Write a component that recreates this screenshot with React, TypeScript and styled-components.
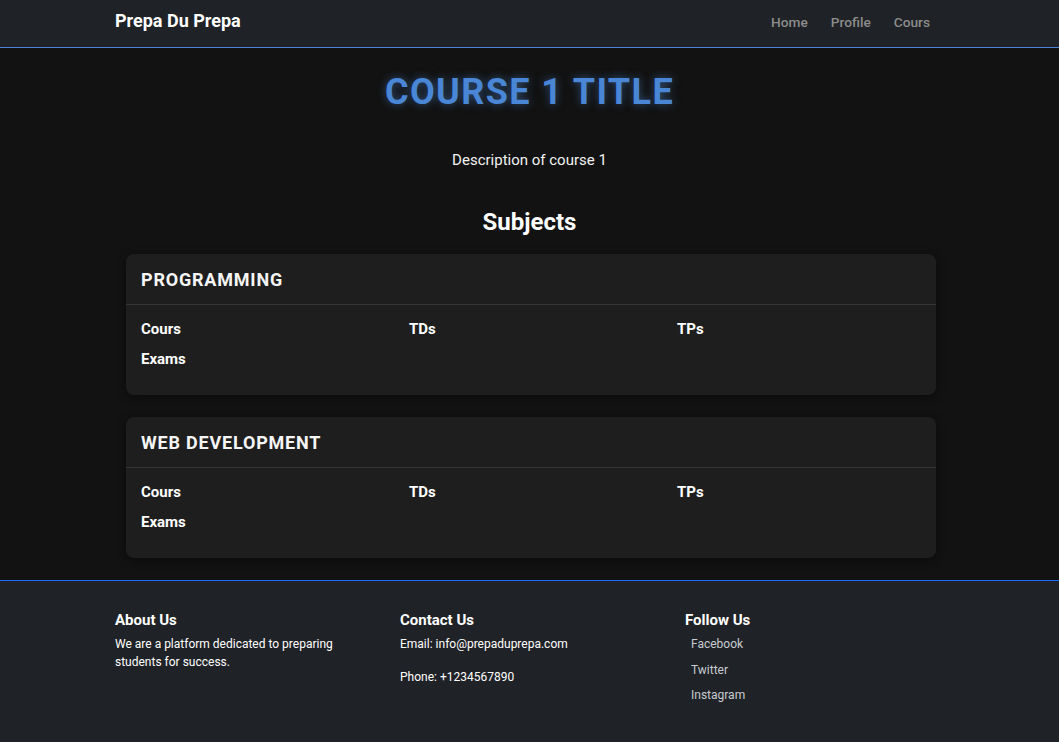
import React from "react";
import styled, { createGlobalStyle } from "styled-components";

const GlobalStyle = createGlobalStyle`
	* {
		box-sizing: border-box;
	}
	body {
		margin: 0;
		background-color: #121212;
		color: #ffffff;
		font-family: Roboto, "Liberation Sans", sans-serif;
	}
`;

const subjects = [
	{ name: "Programming", items: ["Cours", "TDs", "TPs", "Exams"] },
	{ name: "Web Development", items: ["Cours", "TDs", "TPs", "Exams"] },
];

const navLinks = ["Home", "Profile", "Cours"];
const socialLinks = ["Facebook", "Twitter", "Instagram"];

const Page = styled.div`
	min-height: 742px;
	display: flex;
	flex-direction: column;
`;

const Container = styled.div`
	width: 829px;
	margin: 0 auto;
`;

const NavBar = styled.nav`
	background-color: #1f2226;
	border-bottom: 1px solid #4f82d4;
	height: 48px;
`;

const NavInner = styled(Container)`
	height: 100%;
	display: flex;
	align-items: center;
	justify-content: space-between;
`;

const Brand = styled.a`
	font-size: 18px;
	font-weight: 700;
	color: #ffffff;
	text-decoration: none;
	margin-top: -6px;
`;

const NavList = styled.ul`
	list-style: none;
	display: flex;
	margin: 0 14px 0 0;
	padding: 0;
`;

const NavItem = styled.li`
	font-size: 13.7px;
	font-weight: 500;
	color: #8c8c8c;
	padding: 0 11.5px;
	margin-top: -4px;
	&:last-child {
		padding-right: 0;
	}
`;

const Main = styled.main`
	flex: 1;
	padding: 22px 0 15px;
`;

const Title = styled.h1`
	margin: 0;
	text-align: center;
	font-size: 36px;
	font-weight: 700;
	letter-spacing: 1.4px;
	text-transform: uppercase;
	color: #4a86d6;
	text-shadow: 0 0 8px rgba(74, 134, 214, 0.55);
	line-height: 44px;
`;

const Description = styled.p`
	margin: 37px 0 0;
	text-align: center;
	font-size: 15px;
	color: #f2f2f2;
`;

const SectionTitle = styled.h2`
	margin: 36px 0 0;
	text-align: center;
	font-size: 24px;
	font-weight: 700;
	line-height: 34px;
`;

const CardList = styled.div`
	display: flex;
	flex-direction: column;
	gap: 22px;
	margin: 15px 8px 0 11px;
`;

const Card = styled.section`
	background-color: #1e1e1e;
	border-radius: 8px;
	box-shadow: 0 2px 10px rgba(0, 0, 0, 0.45);
	overflow: hidden;
`;

const CardHeader = styled.h3`
	margin: 0;
	height: 51px;
	padding: 0 15px;
	display: flex;
	align-items: center;
	font-size: 18px;
	font-weight: 700;
	letter-spacing: 0.8px;
	text-transform: uppercase;
	border-bottom: 1px solid #363636;
	color: #f5f5f5;
`;

const CardBody = styled.div`
	display: grid;
	grid-template-columns: repeat(3, 268px);
	row-gap: 12px;
	padding: 15px 15px 27px;
`;

const SubjectLink = styled.a`
	font-size: 15px;
	font-weight: 700;
	line-height: 18px;
	color: #ffffff;
	text-decoration: none;
`;

const Footer = styled.footer`
	background-color: #1f2226;
	border-top: 1px solid #1a6dfc;
	padding: 29px 0 38px;
`;

const FooterRow = styled(Container)`
	display: grid;
	grid-template-columns: 285px 285px 1fr;
`;

const FooterColumn = styled.div`
	display: flex;
	flex-direction: column;
`;

const FooterHeading = styled.h4`
	margin: 0 0 5px;
	font-size: 15px;
	font-weight: 700;
	line-height: 20px;
`;

const FooterText = styled.p`
	margin: 0 0 15px;
	font-size: 12px;
	line-height: 18px;
	color: #ffffff;
	max-width: 240px;
`;

const SocialList = styled.ul`
	list-style: none;
	margin: 0;
	padding: 0 0 0 6px;
	display: flex;
	flex-direction: column;
	gap: 7.5px;
`;

const SocialItem = styled.li`
	font-size: 12px;
	line-height: 18px;
	color: #c8ccd2;
`;

export default function App() {
	return (
		<>
			<GlobalStyle />
			<Page>
				<NavBar>
					<NavInner>
						<Brand href="#">Prepa Du Prepa</Brand>
						<NavList>
							{navLinks.map((link) => (
								<NavItem key={link}>{link}</NavItem>
							))}
						</NavList>
					</NavInner>
				</NavBar>

				<Main>
					<Container>
						<Title>Course 1 Title</Title>
						<Description>Description of course 1</Description>
						<SectionTitle>Subjects</SectionTitle>
						<CardList>
							{subjects.map((subject) => (
								<Card key={subject.name}>
									<CardHeader>{subject.name}</CardHeader>
									<CardBody>
										{subject.items.map((item) => (
											<SubjectLink key={item} href="#">
												{item}
											</SubjectLink>
										))}
									</CardBody>
								</Card>
							))}
						</CardList>
					</Container>
				</Main>

				<Footer>
					<FooterRow>
						<FooterColumn>
							<FooterHeading>About Us</FooterHeading>
							<FooterText>
								We are a platform dedicated to preparing students for success.
							</FooterText>
						</FooterColumn>
						<FooterColumn>
							<FooterHeading>Contact Us</FooterHeading>
							<FooterText>Email: info@prepaduprepa.com</FooterText>
							<FooterText>Phone: +1234567890</FooterText>
						</FooterColumn>
						<FooterColumn>
							<FooterHeading>Follow Us</FooterHeading>
							<SocialList>
								{socialLinks.map((s) => (
									<SocialItem key={s}>{s}</SocialItem>
								))}
							</SocialList>
						</FooterColumn>
					</FooterRow>
				</Footer>
			</Page>
		</>
	);
}
